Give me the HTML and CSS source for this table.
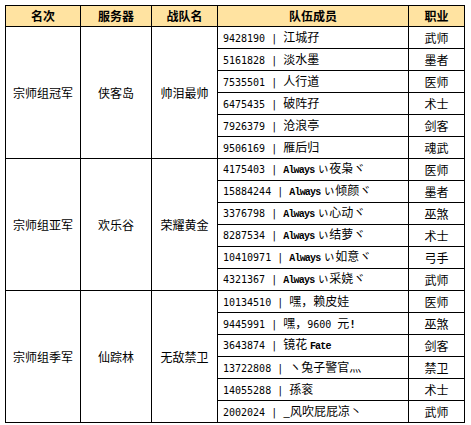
FILE: index.html
```html
<!DOCTYPE html>
<html lang="zh">
<head>
<meta charset="utf-8">
<title>宗师组排名</title>
<link rel="stylesheet" href="styles.css">
</head>
<body>
<table class="rank">
  <colgroup>
    <col class="c1"><col class="c2"><col class="c3"><col class="c4"><col class="c5">
  </colgroup>
  <thead>
    <tr><th>名次</th><th>服务器</th><th>战队名</th><th>队伍成员</th><th>职业</th></tr>
  </thead>
  <tbody>
    <tr><td rowspan="6" class="grp">宗师组冠军</td><td rowspan="6" class="grp">侠客岛</td><td rowspan="6" class="grp">帅泪最帅</td>
      <td class="mem"><span class="n">9428190 | </span>江城孖</td><td class="job">武师</td></tr>
    <tr><td class="mem"><span class="n">5161828 | </span>淡水墨</td><td class="job">墨者</td></tr>
    <tr><td class="mem"><span class="n">7535501 | </span>人行道</td><td class="job">医师</td></tr>
    <tr><td class="mem"><span class="n">6475435 | </span>破阵孖</td><td class="job">术士</td></tr>
    <tr><td class="mem"><span class="n">7926379 | </span>沧浪亭</td><td class="job">剑客</td></tr>
    <tr><td class="mem"><span class="n">9506169 | </span>雁后归</td><td class="job">魂武</td></tr>

    <tr><td rowspan="6" class="grp">宗师组亚军</td><td rowspan="6" class="grp">欢乐谷</td><td rowspan="6" class="grp">荣耀黄金</td>
      <td class="mem"><span class="n">4175403 | </span><span class="en">Always</span> ぃ夜枭ヾ</td><td class="job">医师</td></tr>
    <tr><td class="mem"><span class="n">15884244 | </span><span class="en">Always</span> ぃ倾颜ヾ</td><td class="job">墨者</td></tr>
    <tr><td class="mem"><span class="n">3376798 | </span><span class="en">Always</span> ぃ心动ヾ</td><td class="job">巫煞</td></tr>
    <tr><td class="mem"><span class="n">8287534 | </span><span class="en">Always</span> ぃ结萝ヾ</td><td class="job">术士</td></tr>
    <tr><td class="mem"><span class="n">10410971 | </span><span class="en">Always</span> ぃ如意ヾ</td><td class="job">弓手</td></tr>
    <tr><td class="mem"><span class="n">4321367 | </span><span class="en">Always</span> ぃ采娆ヾ</td><td class="job">武师</td></tr>

    <tr><td rowspan="6" class="grp">宗师组季军</td><td rowspan="6" class="grp">仙踪林</td><td rowspan="6" class="grp">无敌禁卫</td>
      <td class="mem"><span class="n">10134510 | </span>嘿，赖皮娃</td><td class="job">医师</td></tr>
    <tr><td class="mem"><span class="n">9445991 | </span>嘿，<span class="n">9600 </span>元<b class="ex">!</b></td><td class="job">巫煞</td></tr>
    <tr><td class="mem"><span class="n">3643874 | </span>镜花 <span class="en">Fate</span></td><td class="job">剑客</td></tr>
    <tr><td class="mem"><span class="n">13722808 | </span>ヽ兔子警官灬</td><td class="job">禁卫</td></tr>
    <tr><td class="mem"><span class="n">14055288 | </span>孫衮</td><td class="job">术士</td></tr>
    <tr><td class="mem"><span class="n">2002024 | </span>_风吹屁屁凉丶</td><td class="job">武师</td></tr>
  </tbody>
</table>
</body>
</html>
```

FILE: styles.css
```css
html, body {
  margin: 0;
  padding: 0;
  background: #ffffff;
}

body {
  padding: 5px 0 0 5px;
  font-family: "Noto Sans CJK SC", "DejaVu Sans", sans-serif;
  font-size: 12px;
  color: #000000;
}

.rank {
  border-collapse: collapse;
  table-layout: fixed;
  width: 460px;
  border: 1px solid #000000;
}

.c1 { width: 75px; }
.c2 { width: 71px; }
.c3 { width: 66px; }
.c4 { width: 191px; }
.c5 { width: 56px; }

.rank th,
.rank td {
  border: 1px solid #000000;
  padding: 0;
  line-height: 14px;
  white-space: nowrap;
  overflow: hidden;
}

.rank th {
  background: #ffe3a1;
  height: 20px;
  font-weight: bold;
  text-align: center;
  font-size: 12px;
}

.rank td {
  height: 21px;
  vertical-align: middle;
}

.grp {
  text-align: center;
}

.mem {
  text-align: left;
  padding-left: 5px !important;
}

.job {
  text-align: center;
}

.n {
  font-family: "DejaVu Sans Mono", monospace;
  font-size: 10px;
  white-space: pre;
}

.en {
  font-family: "Liberation Mono", monospace;
  font-size: 10px;
  font-weight: bold;
  letter-spacing: -0.8px;
}

.ex {
  font-family: "DejaVu Sans Mono", monospace;
  font-size: 11px;
  font-weight: bold;
}
```
